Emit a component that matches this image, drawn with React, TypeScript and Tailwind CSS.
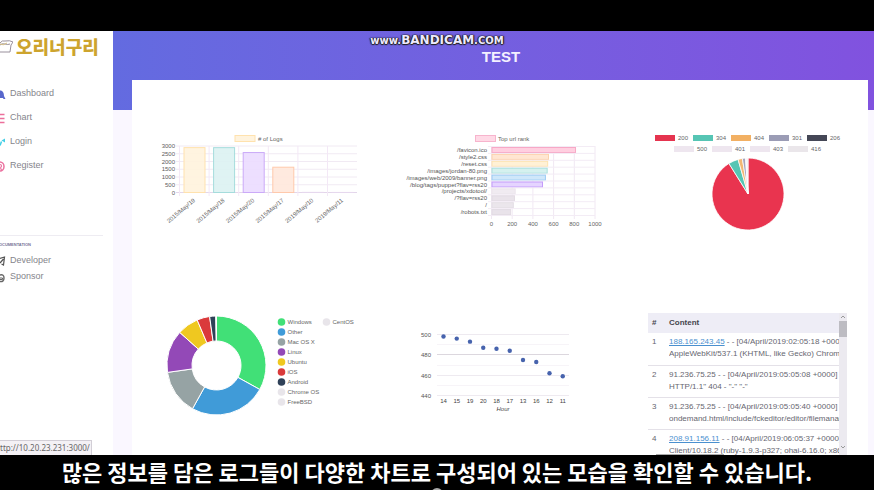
import React from 'react';

const polar = (cx: number, cy: number, r: number, deg: number) => {
  const a = ((deg - 90) * Math.PI) / 180;
  return `${cx + r * Math.cos(a)} ${cy + r * Math.sin(a)}`;
};

const slicePath = (cx: number, cy: number, r: number, inner: number, from: number, to: number) => {
  const large = to - from > 180 ? 1 : 0;
  return `M${polar(cx, cy, inner, from)} L${polar(cx, cy, r, from)} A${r} ${r} 0 ${large} 1 ${polar(cx, cy, r, to)} L${polar(cx, cy, inner, to)} A${inner} ${inner} 0 ${large} 0 ${polar(cx, cy, inner, from)}Z`;
};

const dayBars = [
  { label: '2015/May/19', value: 2896, fill: '#fff3dd', stroke: '#ffe2ae' },
  { label: '2015/May/18', value: 2893, fill: '#dbf2f2', stroke: '#a5dcdc' },
  { label: '2015/May/20', value: 2578, fill: '#ebdcff', stroke: '#cbaaf8' },
  { label: '2015/May/17', value: 1632, fill: '#ffe8dc', stroke: '#ffc9ac' },
  { label: '2019/May/10', value: 8, fill: '#f4eef8', stroke: '#e6d8ee' },
  { label: '2019/May/11', value: 4, fill: '#f4eef8', stroke: '#e6d8ee' },
];

function LogsChart() {
  return (
    <svg viewBox="0 0 248 220" className="w-full font-['Liberation_Sans',sans-serif] text-[6px]" role="img" aria-label="Number of logs">
      <rect x="103" y="55.5" width="20" height="6" fill="#fff3dd" stroke="#ffe2ae" />
      <text x="126" y="61" fill="#666">{'# of Logs'}</text>
      {[0, 500, 1000, 1500, 2000, 2500, 3000].map((v) => {
        const y = 112.5 - (v / 3000) * 46.5;
        return (
          <g key={v}>
            <line x1="44" x2="225" y1={y} y2={y} stroke={v === 0 ? '#e3d6ea' : '#f1eaf3'} />
            <text x="43" y={y + 2} textAnchor="end" fill="#5c5c5c">{v}</text>
          </g>
        );
      })}
      {dayBars.map((b, i) => {
        const x = 47.5 + i * 29.6;
        const h = (b.value / 3000) * 46.5;
        return (
          <g key={b.label}>
            <line x1={x} x2={x} y1="66" y2="116" stroke="#f3e8f6" />
            <rect x={x + 4.5} y={112.5 - h} width="21" height={h} fill={b.fill} fillOpacity="0.9" stroke={b.stroke} />
            <text transform={`translate(${x + 16} 121) rotate(-40)`} textAnchor="end" fill="#666">{b.label}</text>
          </g>
        );
      })}
    </svg>
  );
}

const urls = [
  { label: '/favicon.ico', value: 807, fill: '#ffcfe0', stroke: '#f7a8c6' },
  { label: '/style2.css', value: 546, fill: '#ffe6d2', stroke: '#fdd2ac' },
  { label: '/reset.css', value: 538, fill: '#fff1d6', stroke: '#fde3b0' },
  { label: '/images/jordan-80.png', value: 533, fill: '#d5f1ef', stroke: '#a8e0dc' },
  { label: '/images/web/2009/banner.png', value: 516, fill: '#cfe7fa', stroke: '#9cccf4' },
  { label: '/blog/tags/puppet?flav=rss20', value: 488, fill: '#e5d4ff', stroke: '#c39cfa' },
  { label: '/projects/xdotool/', value: 224, fill: '#f0ebf1', stroke: '#ebe5ec' },
  { label: '/?flav=rss20', value: 217, fill: '#e9e3ea', stroke: '#e2dbe3' },
  { label: '/', value: 206, fill: '#ebe6ec', stroke: '#e4dee5' },
  { label: '/robots.txt', value: 180, fill: '#e9e3ea', stroke: '#e2dbe3' },
];

function UrlChart() {
  return (
    <svg viewBox="0 0 242 220" className="w-full font-['Liberation_Sans',sans-serif] text-[6px]" role="img" aria-label="Top url rank">
      <rect x="95.5" y="55.5" width="20" height="6" fill="#ffd9e6" stroke="#f7b4cd" />
      <text x="118" y="61" fill="#666">Top url rank</text>
      {[0, 200, 400, 600, 800, 1000].map((v) => {
        const x = 111.5 + (v / 1000) * 103.5;
        return (
          <g key={v}>
            <line x1={x} x2={x} y1="66" y2="139" stroke="#f1e8f3" />
            <text x={x} y="146" textAnchor="middle" fill="#666">{v}</text>
          </g>
        );
      })}
      {urls.map((u, i) => {
        const y = 66.5 + i * 6.9;
        return (
          <g key={u.label}>
            <line x1="108" x2="215" y1={y} y2={y} stroke="#f3ecf5" />
            <rect x="112" y={y + 1} width={(u.value / 1000) * 103.5} height="5" fill={u.fill} stroke={u.stroke} />
            <text x="107" y={y + 5.5} textAnchor="end" fill="#555">{u.label}</text>
          </g>
        );
      })}
      <line x1="108" x2="215" y1="135.5" y2="135.5" stroke="#f3ecf5" />
    </svg>
  );
}

const statusRows = [
  [['200', '#e5344f'], ['304', '#56c5b4'], ['404', '#f2b063'], ['301', '#9b9cb5'], ['206', '#454756']],
  [['500', '#eee6ef'], ['401', '#eee6ef'], ['403', '#eee6ef'], ['416', '#eae6ea']],
];

const statusSlices: [number, number, string][] = [
  [0, 328, '#e9344f'],
  [328, 344, '#56c5b4'],
  [344, 351, '#f2b875'],
  [351, 356, '#a5a3bd'],
  [356, 357, '#8a8a98'],
  [357, 360, '#f0eaf1'],
];

function StatusChart() {
  return (
    <svg viewBox="0 0 246 220" className="w-full font-['Liberation_Sans',sans-serif] text-[6px]" role="img" aria-label="Responses by status">
      {statusRows.map((row, r) =>
        row.map(([label, color], i) => {
          const x = (r === 0 ? 33 : 52) + i * 38;
          const y = 55 + r * 11;
          return (
            <g key={label}>
              <rect x={x} y={y} width="20" height="6" fill={color} />
              <text x={x + 23} y={y + 5} fill="#666">{label}</text>
            </g>
          );
        }),
      )}
      {statusSlices.map(([from, to, color]) => (
        <path key={from} d={slicePath(126, 114, 36, 0, from, to)} fill={color} stroke="#fff" strokeWidth="0.8" />
      ))}
    </svg>
  );
}

const systems: [string, string][] = [
  ['Windows', '#41e077'],
  ['Other', '#409bd8'],
  ['Mac OS X', '#96a3a4'],
  ['Linux', '#9349b7'],
  ['Ubuntu', '#efc820'],
  ['iOS', '#da3a3b'],
  ['Android', '#2f4158'],
  ['Chrome OS', '#e8e5ea'],
  ['FreeBSD', '#e8e5ea'],
  ['CentOS', '#e8e5ea'],
];
const systemStops = [0, 119, 209, 262, 312, 337, 352, 359];

function SystemChart() {
  return (
    <svg viewBox="0 0 248 155" className="w-full font-['Liberation_Sans',sans-serif] text-[6px]" role="img" aria-label="Operating systems">
      {systemStops.slice(0, -1).map((from, i) => (
        <path key={from} d={slicePath(84.5, 65.5, 49.5, 24.5, from, systemStops[i + 1])} fill={systems[i][1]} stroke="#fff" />
      ))}
      {systems.map(([name, color], i) => {
        const x = i < 9 ? 149.5 : 194.5;
        const y = 22 + (i % 9) * 10;
        return (
          <g key={name}>
            <circle cx={x} cy={y} r="3.8" fill={color} />
            <text x={x + 6} y={y + 2} fill="#666">{name}</text>
          </g>
        );
      })}
    </svg>
  );
}

const hours: [number, number][] = [
  [14, 498], [15, 496], [19, 493], [20, 487], [18, 486], [17, 484], [13, 475], [16, 473], [12, 462], [11, 459],
];

function HourChart() {
  return (
    <svg viewBox="0 0 242 155" className="w-full font-['Liberation_Sans',sans-serif] text-[6px]" role="img" aria-label="Logs by hour">
      {[500, 490, 480, 470, 460, 450, 440].map((v) => {
        const y = 34.5 + Math.round((500 - v) * 1.02);
        return (
          <g key={v}>
            <line x1="57" x2="189" y1={y} y2={y} stroke={v === 480 ? '#dcd7de' : v % 20 ? '#f7f4f8' : '#eeeaf0'} />
            {v % 20 === 0 && <text x="51" y={y + 2} textAnchor="end" fill="#555">{v}</text>}
          </g>
        );
      })}
      {hours.map(([hour, v], i) => (
        <g key={hour}>
          <circle cx={63.5 + i * 13.25} cy={34.5 + (500 - v) * 1.02} r="2.2" fill="#4763ad" />
          <text x={63.5 + i * 13.25} y="103" textAnchor="middle" fill="#444">{hour}</text>
        </g>
      ))}
      <text x="123" y="111" textAnchor="middle" fontStyle="italic" fill="#444">Hour</text>
    </svg>
  );
}

const logs = [
  { ip: '188.165.243.45', link: true, rest: ' - - [04/April/2019:02:05:18 +0000]', more: 'AppleWebKit/537.1 (KHTML, like Gecko) Chrome/21' },
  { ip: '91.236.75.25', link: false, rest: ' - - [04/April/2019:05:05:08 +0000]', more: 'HTTP/1.1" 404 - "-" "-"' },
  { ip: '91.236.75.25', link: false, rest: ' - - [04/April/2019:05:05:40 +0000]', more: 'ondemand.html/include/fckeditor/editor/filemanager' },
  { ip: '208.91.156.11', link: true, rest: ' - - [04/April/2019:06:05:37 +0000]', more: 'Client/10.18.2 (ruby-1.9.3-p327; ohai-6.16.0; x86_64' },
];

function LogTable() {
  return (
    <div className="relative mt-[13px] mr-[21px] ml-[26px] flex h-[142px] overflow-hidden">
      <div className="min-w-0 flex-1 overflow-hidden">
        <table className="w-full table-fixed border-collapse text-left text-[8px] leading-[12px] text-[#666670]">
          <thead className="bg-[#eeedf6] text-[#45454d]">
            <tr className="h-5">
              <th className="w-[21px] pl-1">#</th>
              <th>Content</th>
            </tr>
          </thead>
          <tbody>
            {logs.map((l, i) => (
              <tr key={i} className="h-8 border-b border-[#e4e1e8] align-top">
                <td className="pt-[3px] pl-1">{i + 1}</td>
                <td className="overflow-hidden pt-[3px] whitespace-nowrap">
                  {l.link ? <a href="#log" className="text-[#4a90cf] underline">{l.ip}</a> : l.ip}
                  {l.rest}
                  <br />
                  {l.more}
                </td>
              </tr>
            ))}
          </tbody>
        </table>
      </div>
      <div className="flex w-2 flex-col items-center bg-[#eceaf0] py-[2px]">
        <svg viewBox="0 0 6 4" className="h-1 w-[6px]" fill="none" stroke="#999"><path d="M1 3l2-2 2 2" /></svg>
        <div className="mt-[2px] h-4 w-full bg-[#bdbcc2]" />
        <svg viewBox="0 0 6 4" className="mt-auto mb-1 h-1 w-[6px]" fill="none" stroke="#999"><path d="M1 1l2 2 2-2" /></svg>
      </div>
      <div className="absolute bottom-0 left-2 h-px w-[68px] bg-[#aaa]" />
    </div>
  );
}

const navItems = [
  { name: 'Dashboard', icon: <path d="M0 2.5C3 2.5 4 5 4 8l1.500 3H3.500L3 10H0z" fill="#5867cc" /> },
  { name: 'Chart', icon: <path d="M0 2.5h4.500M0 6.500h4.500M0 10.500h4.500" stroke="#ec6f9b" strokeWidth="1.300" /> },
  { name: 'Login', icon: <><path d="M0 9.500l1.500-4" stroke="#43cfe6" strokeWidth="1.500" /><path d="M1.500 4.500l3.500-2v4z" fill="#43cfe6" /></> },
  { name: 'Register', icon: <><path d="M0 2a4 4.500 0 0 1 0 9" fill="none" stroke="#eb719f" strokeWidth="1.500" /><path d="M0 4.500a1.500 1.500 0 0 1 0 3M0 8.500l2 1" fill="none" stroke="#eb719f" strokeWidth="1.200" /></> },
];

const docItems = [
  { name: 'Developer', icon: <path d="M0 3.500l4.500-1.500-1 8-2-1M0 8l3.500-4" fill="none" stroke="#555" strokeWidth="1.200" /> },
  { name: 'Sponsor', icon: <><path d="M0 4q4-1 4 3t-4 3.500" fill="none" stroke="#666" strokeWidth="1.400" /><path d="M0 7h2.500v1.500H0" fill="none" stroke="#666" /></> },
];

function NavLink({ name, icon }: { name: string; icon: React.ReactNode }) {
  return (
    <a href={`#${name.toLowerCase()}`} className="flex h-4 items-center gap-1 text-[9px] text-[#85858c]">
      <svg viewBox="0 0 6 12" className="h-3 w-[6px]">{icon}</svg>
      {name}
    </a>
  );
}

function Sidebar() {
  return (
    <aside className="flex w-[113px] shrink-0 flex-col bg-white">
      <div className="flex h-[30px] items-center gap-[3px]">
        <svg viewBox="0 0 13 16" className="h-4 w-[13px]" fill="none" stroke="#99909c">
          <path d="M0 5q2-3 5-2 5-1 8 1l-2 3-1 7H0M0 7q2-2 5-1t5 0" />
          <path d="M0 6q3 2 7-1" stroke="#d5bf83" />
        </svg>
        <span className="font-['Noto_Sans_CJK_KR',sans-serif] text-[18px] leading-6 font-black text-[#cda42e]">오리너구리</span>
      </div>
      <nav aria-label="Main" className="mt-[25px] flex flex-col gap-2">
        {navItems.map((n) => <NavLink key={n.name} {...n} />)}
      </nav>
      <hr className="mt-[61px] mr-[10px] border-[#eeecf2]" />
      <h2 className="mt-[7px] -ml-1 text-[4px] leading-[4px] font-bold text-[#777596]">DOCUMENTATION</h2>
      <nav aria-label="Documentation" className="mt-[6px] flex flex-col">
        {docItems.map((n) => <NavLink key={n.name} {...n} />)}
      </nav>
      <div className="mt-auto flex h-[15px] w-[92px] items-center border-t border-r border-[#d2ced6] bg-[#f4f1f5] font-['Noto_Sans',sans-serif] text-[8px] text-[#666]">
        ttp://10.20.23.231:3000/
      </div>
    </aside>
  );
}

export default function App() {
  return (
    <div className="relative flex h-screen flex-col overflow-hidden bg-black font-['Liberation_Sans',sans-serif]">
      <div className="absolute top-[34px] right-0 left-0 z-10 flex items-baseline justify-center font-['DejaVu_Sans',sans-serif] leading-3 font-bold text-[#eeeaff] [text-shadow:0_0_2px_#222,0_1px_1px_#222,1px_0_1px_#222,-1px_0_1px_#222]">
        <span className="text-[10px]">www.</span>
        <span className="text-[12px]">BANDICAM</span>
        <span className="text-[10px]">.COM</span>
      </div>
      <div className="mt-[31px] flex min-h-0 flex-1 overflow-hidden">
        <Sidebar />
        <main className="flex min-w-0 flex-1 flex-col overflow-hidden bg-[#faf7ff]">
          <header className="h-[79px] shrink-0 bg-linear-to-r from-[#636be0] to-[#8152df] pt-4">
            <h1 className="ml-[15px] text-center text-[15px] leading-5 font-bold text-[#f4f0ff]">TEST</h1>
          </header>
          <section className="-mt-[30px] mr-[6px] ml-[19px] grid flex-1 grid-cols-[248fr_242fr_246fr] content-start bg-white">
            <LogsChart />
            <UrlChart />
            <StatusChart />
            <SystemChart />
            <HourChart />
            <LogTable />
          </section>
        </main>
      </div>
      <footer className="relative flex h-[35px] shrink-0 justify-center overflow-hidden font-['Noto_Sans_CJK_KR',sans-serif]">
        <p className="text-[22px] leading-8 font-bold whitespace-nowrap text-white">많은 정보를 담은 로그들이 다양한 차트로 구성되어 있는 모습을 확인할 수 있습니다.</p>
        <span className="absolute -bottom-[10px] left-1/2 size-3 -translate-x-1/2 rounded-full bg-[#aaa]" />
      </footer>
    </div>
  );
}
